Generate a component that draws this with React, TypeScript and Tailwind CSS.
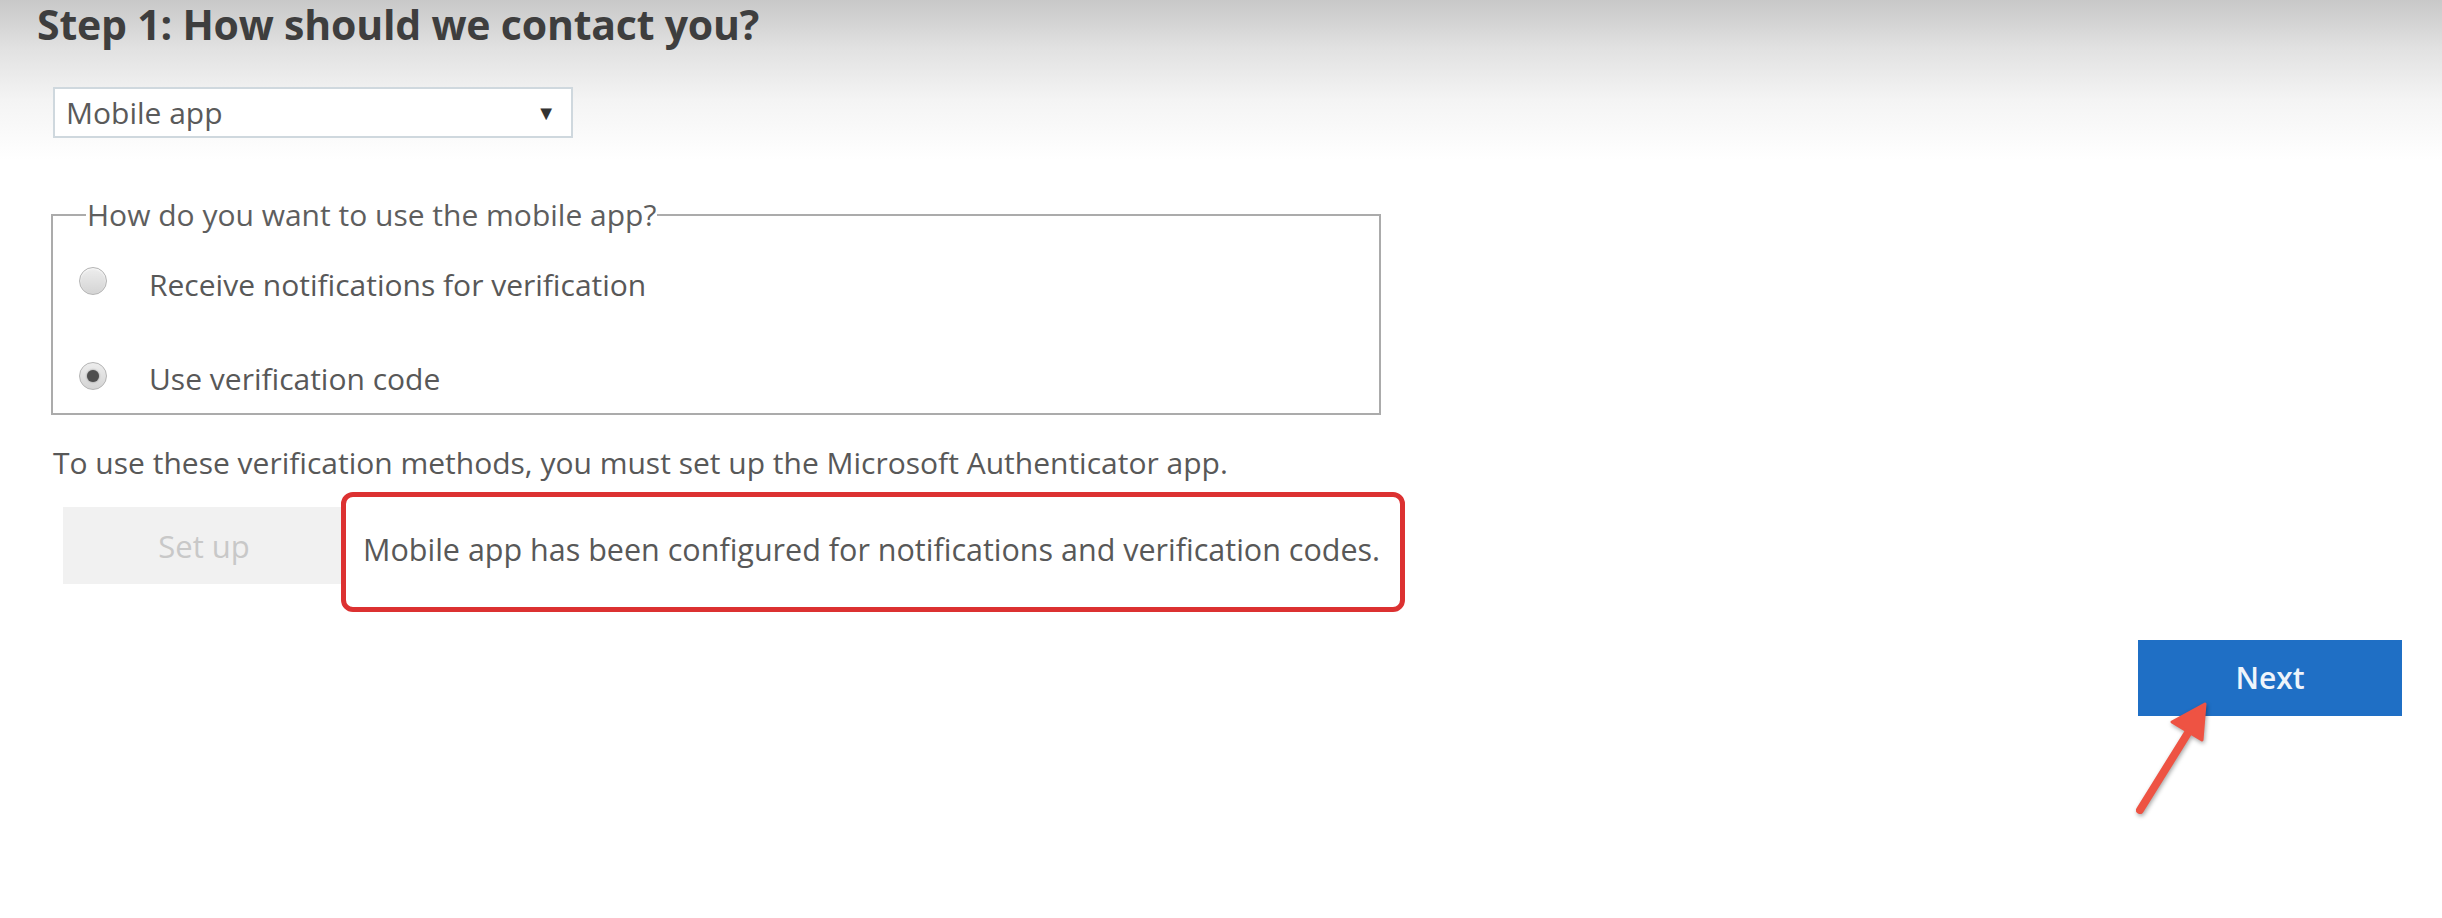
export default function App() {
  return (
    <div className="relative min-h-[918px] w-full bg-[linear-gradient(180deg,#c8c8c8_0px,#e2e2e2_50px,#f4f4f4_100px,#ffffff_160px)] pl-[37px] font-['Open_Sans',sans-serif] text-[#585858]">
      {/* Heading */}
      <h1 className="text-[41px] leading-[48px] font-bold tracking-[-0.2px] text-[#3e3e3e]">Step 1: How should we contact you?</h1>

      {/* Contact method select */}
      <div className="ml-[16px] mt-[39px] flex h-[51px] w-[520px] items-center justify-between border-2 border-[#cfd8de] bg-white pl-[11px] pr-[15px]">
        <span className="text-[30px] leading-[40px] text-[#5a5a5a]">Mobile app</span>
        <span className="text-[20px] leading-none text-[#333]">▼</span>
      </div>

      {/* Mobile app options */}
      <fieldset className="ml-[14px] mt-[57px] w-[1330px] border-2 border-[#ababab] px-[26px] pb-[14px]">
        <legend className="ml-[7px] px-[1px] text-[30px] leading-[40px] text-[#5e5e5e]">How do you want to use the mobile app?</legend>
        <div className="mt-[30px] flex flex-col gap-[54px]">
          <label className="flex items-start">
            <span className="mt-[2px] h-[28px] w-[28px] shrink-0 rounded-full border border-[#b4b4b4] bg-[linear-gradient(180deg,#ededed,#d4d4d4)] shadow-[inset_0_1px_2px_rgba(255,255,255,0.8)]" />
            <span className="ml-[42px] text-[30px] leading-[40px]">Receive notifications for verification</span>
          </label>
          <label className="flex items-start">
            <span className="mt-[3px] flex h-[28px] w-[28px] shrink-0 items-center justify-center rounded-full border border-[#b4b4b4] bg-[linear-gradient(180deg,#ededed,#d4d4d4)]">
              <span className="h-[12px] w-[12px] rounded-full bg-[#4e4e4e] shadow-[0_0_2px_rgba(0,0,0,0.5)]" />
            </span>
            <span className="ml-[42px] text-[30px] leading-[40px]">Use verification code</span>
          </label>
        </div>
      </fieldset>

      <p className="ml-[16px] mt-[28px] text-[30px] leading-[40px]">
        To use these verification methods, you must set up the Microsoft Authenticator app.
      </p>

      {/* Set up + status */}
      <div className="mt-[9px] flex items-start">
        <button className="ml-[26px] mt-[15px] flex h-[77px] w-[282px] items-center justify-center bg-[#f1f1f1] text-[31px] leading-[40px] text-[#c8c8c8]">
          Set up
        </button>
        <div className="relative -ml-[4px] flex h-[120px] w-[1064px] items-center rounded-[12px] border-[5px] border-[#dc3131] bg-white pb-[6px] pl-[17px]">
          <span className="text-[30.5px] leading-[40px]">Mobile app has been configured for notifications and verification codes.</span>
        </div>
      </div>

      {/* Next */}
      <div className="mt-[28px] flex justify-end pr-[40px]">
        <button className="flex h-[76px] w-[264px] items-center justify-center bg-[#1f6fc5] text-[30px] leading-[40px] font-semibold text-[#eef4fb]">
          Next
        </button>
      </div>

      {/* Annotation arrow */}
      <svg className="absolute left-[2120px] top-[690px] drop-shadow-[1px_2px_2px_rgba(0,0,0,0.35)]" width="100" height="135" viewBox="0 0 100 135">
        <line x1="20" y1="120" x2="76" y2="30" stroke="#ee5343" strokeWidth="8" strokeLinecap="round" />
        <polygon points="85,14 52,32 82,50" fill="#ee5343" stroke="#ee5343" strokeWidth="3" strokeLinejoin="round" />
      </svg>
    </div>
  );
}
